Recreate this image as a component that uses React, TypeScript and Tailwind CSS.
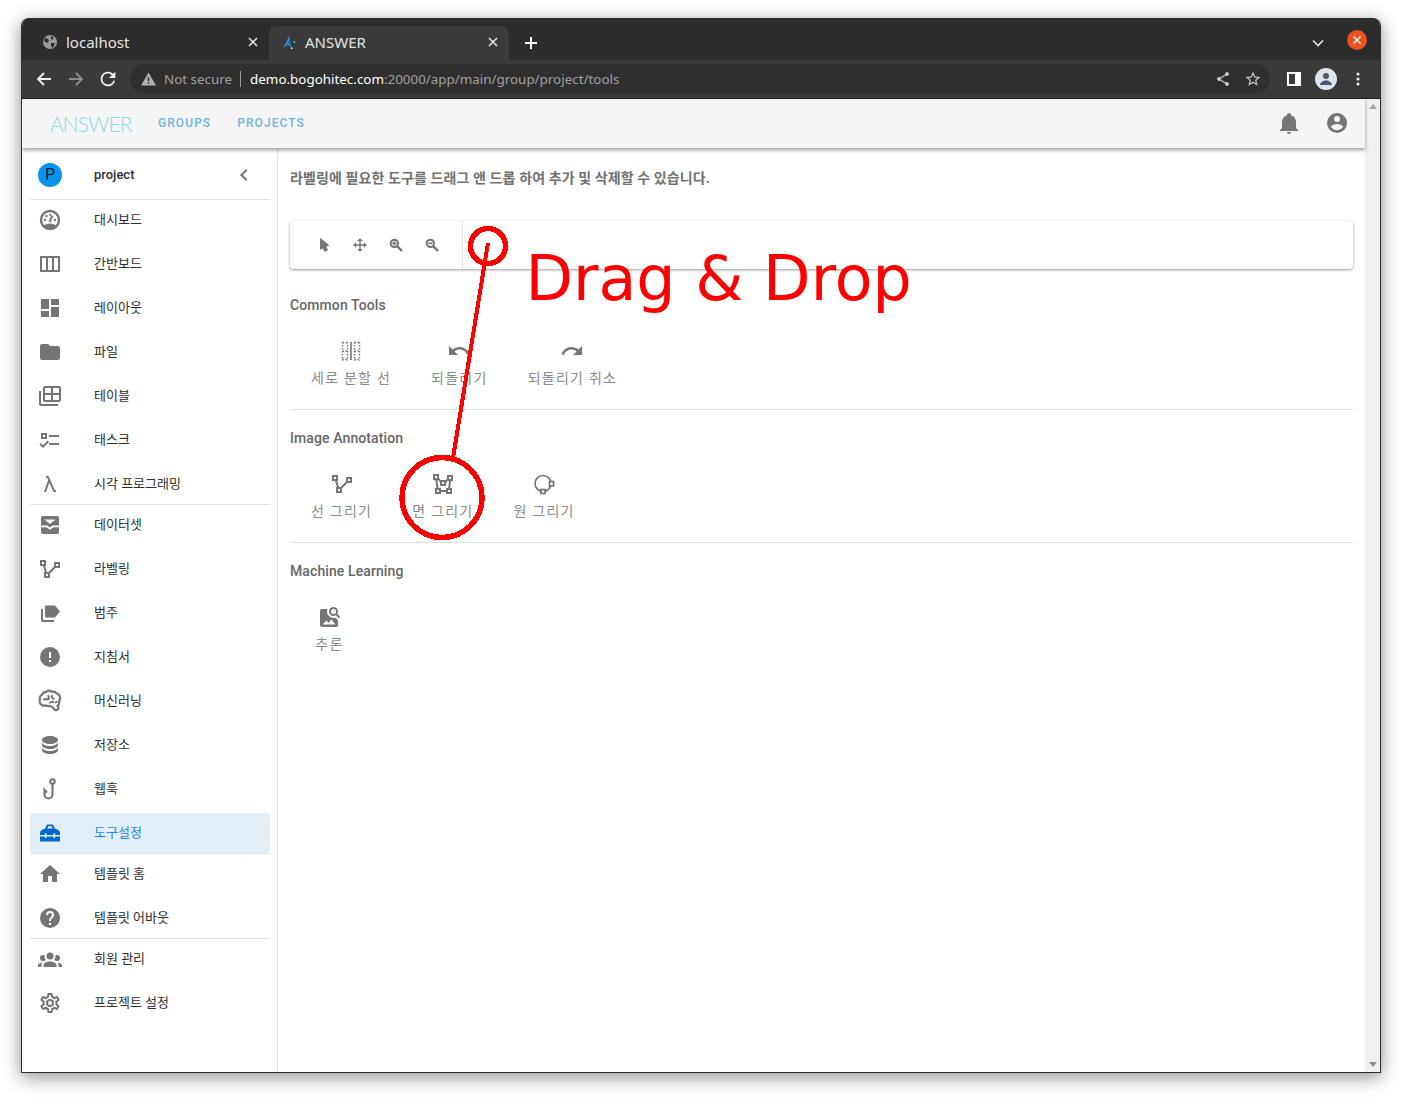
import React from "react";

const P = {
  chevL: "M15.41,16.58L10.83,12L15.41,7.41L14,6L8,12L14,18L15.41,16.58Z",
  column: "M2 4H22V20H2V4M4 6V18H8V6H4M10 6V18H14V6H10M16 6V18H20V6H16Z",
  dash: "M13,3V9H21V3M13,21H21V11H13M3,21H11V15H3M3,13H11V3H3V13Z",
  folder: "M10,4H4C2.89,4 2,4.89 2,6V18A2,2 0 0,0 4,20H20A2,2 0 0,0 22,18V8C22,6.89 21.1,6 20,6H12L10,4Z",
  tasks: "M3,5H9V11H3V5M5,7V9H7V7H5M11,7H21V9H11V7M11,15H21V17H11V15M5,20L1.5,16.5L2.91,15.09L5,17.17L9.59,12.59L11,14L5,20Z",
  lambda: "M6,20L10.16,7.91L9.34,6H8V4H10C10.42,4 10.78,4.26 10.93,4.63L16.66,18H18V20H16C15.57,20 15.21,19.73 15.07,19.36L11.33,10.65L8.12,20H6Z",
  polyline: "M2 3V9H4.95L6.95 15H6V21H12V16.41L17.41 11H22V5H16V9.59L10.59 15H9.06L7.06 9H8V3M4 5H6V7H4M18 7H20V9H18M8 17H10V19H8Z",
  alert: "M13,13H11V7H13M13,17H11V15H13M12,2A10,10 0 0,0 2,12A10,10 0 0,0 12,22A10,10 0 0,0 22,12A10,10 0 0,0 12,2Z",
  db: "M12,3C7.58,3 4,4.79 4,7C4,9.21 7.58,11 12,11C16.42,11 20,9.21 20,7C20,4.79 16.42,3 12,3M4,9V12C4,14.21 7.58,16 12,16C16.42,16 20,14.21 20,12V9C20,11.21 16.42,13 12,13C7.58,13 4,11.21 4,9M4,14V17C4,19.21 7.58,21 12,21C16.42,21 20,19.21 20,17V14C20,16.21 16.42,18 12,18C7.58,18 4,16.21 4,14Z",
  toolbox: "M2 14V12C2 10 4 8.300 7 7.800L9 3.500H15L17 7.800C20 8.300 22 10 22 12V14H17.200V12.300H15.500V14H8.500V12.300H6.800V14H2M10.200 5.300L9.400 7.500H14.600L13.800 5.300H10.200M2 15.500H6.800V17H8.500V15.500H15.500V17H17.200V15.500H22V20.500H2V15.500Z",
  home: "M10,20V14H14V20H19V12H22L12,3L2,12H5V20H10Z",
  help: "M15.07,11.25L14.17,12.17C13.45,12.89 13,13.5 13,15H11V14.5C11,13.39 11.45,12.39 12.17,11.67L13.41,10.41C13.78,10.05 14,9.55 14,9C14,7.89 13.1,7 12,7A2,2 0 0,0 10,9H8A4,4 0 0,1 12,5A4,4 0 0,1 16,9C16,9.88 15.64,10.67 15.07,11.25M13,19H11V17H13M12,2A10,10 0 0,0 2,12A10,10 0 0,0 12,22A10,10 0 0,0 22,12C22,6.47 17.5,2 12,2Z",
  group: "M12,5.5A3.5,3.5 0 0,1 15.5,9A3.5,3.5 0 0,1 12,12.5A3.5,3.5 0 0,1 8.5,9A3.5,3.5 0 0,1 12,5.5M5,8C5.56,8 6.08,8.15 6.53,8.42C6.38,9.85 6.8,11.27 7.66,12.38C7.16,13.34 6.16,14 5,14A3,3 0 0,1 2,11A3,3 0 0,1 5,8M19,8A3,3 0 0,1 22,11A3,3 0 0,1 19,14C17.84,14 16.84,13.34 16.34,12.38C17.2,11.27 17.62,9.85 17.47,8.42C17.92,8.15 18.44,8 19,8M5.5,18.25C5.5,16.18 8.41,14.5 12,14.5C15.59,14.5 18.5,16.18 18.5,18.25V20H5.5V18.25M0,20V18.5C0,17.11 1.89,15.94 4.45,15.6C3.86,16.28 3.5,17.22 3.5,18.25V20H0M24,20H20.5V18.25C20.5,17.22 20.14,16.28 19.55,15.6C22.11,15.94 24,17.11 24,18.5V20Z",
  cog: "M12,8A4,4 0 0,1 16,12A4,4 0 0,1 12,16A4,4 0 0,1 8,12A4,4 0 0,1 12,8M12,10A2,2 0 0,0 10,12A2,2 0 0,0 12,14A2,2 0 0,0 14,12A2,2 0 0,0 12,10M10,22C9.75,22 9.54,21.82 9.5,21.58L9.13,18.93C8.5,18.68 7.96,18.34 7.44,17.94L4.95,18.95C4.73,19.03 4.46,18.95 4.34,18.73L2.34,15.27C2.21,15.05 2.27,14.78 2.46,14.63L4.57,12.97L4.5,12L4.57,11L2.46,9.37C2.27,9.22 2.21,8.95 2.34,8.73L4.34,5.27C4.46,5.05 4.73,4.96 4.95,5.05L7.44,6.05C7.96,5.66 8.5,5.32 9.13,5.07L9.5,2.42C9.54,2.18 9.75,2 10,2H14C14.25,2 14.46,2.18 14.5,2.42L14.87,5.07C15.5,5.32 16.04,5.66 16.56,6.05L19.05,5.05C19.27,4.96 19.54,5.05 19.66,5.27L21.66,8.73C21.79,8.95 21.73,9.22 21.54,9.37L19.43,11L19.5,12L19.43,13L21.54,14.63C21.73,14.78 21.79,15.05 21.66,15.27L19.66,18.73C19.54,18.95 19.27,19.04 19.05,18.95L16.56,17.95C16.04,18.34 15.5,18.68 14.87,18.93L14.5,21.58C14.46,21.82 14.25,22 14,22H10M11.25,4L10.88,6.61C9.68,6.86 8.62,7.5 7.85,8.39L5.44,7.35L4.69,8.65L6.8,10.2C6.4,11.37 6.4,12.64 6.8,13.8L4.68,15.36L5.43,16.66L7.86,15.62C8.63,16.5 9.68,17.14 10.87,17.38L11.24,20H12.76L13.13,17.39C14.32,17.14 15.37,16.5 16.14,15.62L18.57,16.66L19.32,15.36L17.2,13.81C17.6,12.64 17.6,11.37 17.2,10.2L19.31,8.65L18.56,7.35L16.15,8.39C15.38,7.5 14.32,6.86 13.12,6.62L12.75,4H11.25Z",
  cursor: "M13.64,21.97C13.14,22.21 12.54,22 12.31,21.5L10.13,16.76L7.62,18.78C7.45,18.92 7.24,19 7,19A1,1 0 0,1 6,18V3A1,1 0 0,1 7,2C7.24,2 7.47,2.09 7.64,2.23L7.65,2.22L19.14,11.86C19.57,12.22 19.62,12.85 19.27,13.27C19.12,13.45 18.91,13.57 18.7,13.61L15.54,14.23L17.74,18.96C18,19.46 17.76,20.05 17.26,20.28L13.64,21.97Z",
  move: "M13,6V11H18V7.75L22.25,12L18,16.25V13H13V18H16.25L12,22.25L7.75,18H11V13H6V16.25L1.75,12L6,7.75V11H11V6H7.75L12,1.75L16.25,6H13Z",
  undo: "M12.5,8C9.85,8 7.45,9 5.6,10.6L2,7V16H11L7.38,12.38C8.77,11.22 10.54,10.5 12.5,10.5C16.04,10.5 19.05,12.81 20.1,16L22.47,15.22C21.08,11.03 17.15,8 12.5,8Z",
  redo: "M18.4,10.6C16.55,9 14.15,8 11.5,8C6.85,8 2.92,11.03 1.54,15.22L3.9,16C4.95,12.81 7.95,10.5 11.5,10.5C13.45,10.5 15.23,11.22 16.62,12.38L13,16H22V7L18.4,10.6Z",
  polygon: "M2,2V8H4.28L5.57,16H4V22H10V20.06L15,20.05V22H21V16H19.17L20,9H22V3H16V6.53L14.8,8H9.59L8,5.82V2M4,4H6V6H4M18,5H20V7H18M6.31,8H7.11L9,10.59V14H15V10.91L16.57,9H18L17.16,16H15V18.06H10V16H7.6M11,10H13V12H11M6,18H8V20H6M17,18H19V20H17",
  imgSearch: "M15.5,2C18,2 20,4 20,6.5C20,7.38 19.75,8.21 19.31,8.9L22.39,12L21,13.39L17.88,10.32C17.19,10.75 16.37,11 15.5,11C13,11 11,9 11,6.5C11,4 13,2 15.5,2M15.5,4A2.5,2.5 0 0,0 13,6.5A2.5,2.5 0 0,0 15.5,9A2.5,2.5 0 0,0 18,6.5A2.5,2.5 0 0,0 15.5,4M20,20A2,2 0 0,1 18,22H4A2,2 0 0,1 2,20V6A2,2 0 0,1 4,4H9.5C9.18,4.77 9,5.61 9,6.5A6.5,6.5 0 0,0 15.5,13C16.18,13 16.83,12.89 17.44,12.69L20,15.25V20M4.5,19.5H17.5L13.5,14.5L10.5,18L8.5,15.5L4.5,19.5Z",
  bell: "M21,19V20H3V19L5,17V11C5,7.9 7.03,5.17 10,4.29C10,4.19 10,4.1 10,4A2,2 0 0,1 12,2A2,2 0 0,1 14,4C14,4.1 14,4.19 14,4.29C16.97,5.17 19,7.9 19,11V17L21,19M14,21A2,2 0 0,1 12,23A2,2 0 0,1 10,21",
  account: "M12,19.2C9.5,19.2 7.29,17.92 6,16C6.03,14 10,12.9 12,12.9C14,12.9 17.97,14 18,16C16.71,17.92 14.5,19.2 12,19.2M12,5A3,3 0 0,1 15,8A3,3 0 0,1 12,11A3,3 0 0,1 9,8A3,3 0 0,1 12,5M12,2A10,10 0 0,0 2,12A10,10 0 0,0 12,22A10,10 0 0,0 22,12C22,6.47 17.5,2 12,2Z",
};

function I({ d, size = 24, className = "text-[#757575]" }: { d: string; size?: number; className?: string }) {
  return (
    <svg width={size} height={size} viewBox="0 0 24 24" className={"shrink-0 " + className}>
      <path d={d} fill="currentColor" fillRule="evenodd" />
    </svg>
  );
}

function S({ children, size = 24 }: { children: React.ReactNode; size?: number }) {
  return (
    <svg width={size} height={size} viewBox="0 0 24 24" className="shrink-0 text-[#757575]" fill="none" stroke="currentColor" strokeWidth={2}>
      {children}
    </svg>
  );
}

const Gauge = () => (
  <S>
    <circle cx="12" cy="12" r="9" strokeWidth={2.4} />
    <path d="M5 18.500C7 16.300 9.500 15.500 12 15.500s5 .8 7 3L16 21.500H8z" fill="currentColor" stroke="none" />
    <path d="M11.500 14 14.500 7.500" strokeWidth={2} />
    <circle cx="7" cy="12" r="1.200" fill="currentColor" stroke="none" />
    <circle cx="8.500" cy="8" r="1.200" fill="currentColor" stroke="none" />
    <circle cx="12" cy="6.800" r="1.100" fill="currentColor" stroke="none" />
    <circle cx="17" cy="12" r="1.200" fill="currentColor" stroke="none" />
  </S>
);
const TableMulti = () => (
  <S>
    <rect x="6" y="3" width="16" height="14" rx="1" />
    <path d="M6 10h16M14 3v14" />
    <path d="M2 7v13a1 1 0 0 0 1 1h17" />
  </S>
);
const Inbox = () => (
  <I d="M5 3H19A2 2 0 0 1 21 5V19A2 2 0 0 1 19 21H5A2 2 0 0 1 3 19V5A2 2 0 0 1 5 3M3 12.500V14.200H8.500L12 16.800L15.500 14.200H21V12.500H14.700L12 14.500L9.300 12.500H3M6.500 6.500L12 11L17.500 6.500H6.500Z" />
);
const Labels = () => (
  <S>
    <path d="M8 4.500h9l5 6-5 6H8a1 1 0 0 1-1-1v-10a1 1 0 0 1 1-1z" fill="currentColor" stroke="none" />
    <path d="M4 8v11a1 1 0 0 0 1 1h11" />
  </S>
);
const Brain = () => (
  <S>
    <path
      strokeWidth={2.2}
      d="M21.33,12.91C21.42,14.46 20.71,15.95 19.44,16.86L20.21,18.35C20.44,18.8 20.47,19.33 20.27,19.8C20.08,20.27 19.69,20.64 19.21,20.8L18.42,21.05C18.25,21.11 18.06,21.14 17.88,21.14C17.37,21.14 16.89,20.91 16.56,20.5L14.44,18C13.55,17.85 12.71,17.47 12,16.9C11.5,17.05 11,17.13 10.5,17.13C9.62,17.13 8.74,16.86 8,16.34C7.47,16.5 6.93,16.57 6.38,16.56C5.59,16.57 4.81,16.41 4.08,16.11C2.65,15.47 1.7,14.07 1.65,12.5C1.57,11.78 1.69,11.05 2,10.39C1.71,9.64 1.68,8.82 1.93,8.06C2.3,7.11 3,6.32 3.87,5.82C4.45,4.13 6.08,3 7.87,3.12C9.47,1.62 11.92,1.46 13.7,2.75C14.12,2.64 14.56,2.58 15,2.58C16.36,2.55 17.65,3.15 18.5,4.22C20.54,4.75 22,6.57 22.08,8.69C22.13,9.8 21.83,10.89 21.22,11.82C21.29,12.18 21.33,12.54 21.33,12.91Z"
    />
    <path strokeWidth={2} d="M5.500 11.500c1-2 3-2 4.500-.5M10 6c1.200 1.500 1.200 3 0 5M14 6c-.7 2 .3 4 2.500 4M11.500 14.500c.7-1.800 3-2.300 4.500-.8M17 13.500c1 0 2-.5 2.200-1.700" />
  </S>
);
const Hook = () => (
  <S>
    <circle cx="14.500" cy="4.500" r="2.300" />
    <path d="M14.500 7v10.500a4 4 0 0 1-8 0v-4.500l2.500 2.500" strokeWidth={2.200} />
  </S>
);
const Split = () => (
  <S>
    <path d="M12 3v18" strokeWidth={1.6} />
    <path d="M3.500 3v18.500M8.500 3v18.500M15.500 3v18.500M20.500 3v18.500" strokeWidth={1.4} strokeDasharray="1.500 1.500" />
    <path d="M3.500 3.500h5M15.500 3.500h5M3.500 20.500h5M15.500 20.500h5M3.500 12h5M15.500 12h5" strokeWidth={1.4} strokeDasharray="1.500 1.500" />
  </S>
);
const CircleTool = () => (
  <S>
    <circle cx="11" cy="11.500" r="8" strokeWidth={1.700} />
    <rect x="17.500" y="9.500" width="4" height="4.500" fill="#fff" strokeWidth={1.700} />
    <rect x="9" y="17.500" width="4" height="4" fill="#fff" strokeWidth={1.700} />
  </S>
);
const Zoom = ({ plus }: { plus?: boolean }) => (
  <S size={16}>
    <circle cx="9.500" cy="9.500" r="5.500" strokeWidth={3} />
    <path d="M14 14 21 21" strokeWidth={3.600} />
    <path d={plus ? "M6.500 9.500h6M9.500 6.500v6" : "M6.500 9.500h6"} strokeWidth={2.400} />
  </S>
);

type Item = { label: string; icon: React.ReactNode; active?: boolean };
const groups: Item[][] = [
  [
    { label: "대시보드", icon: <Gauge /> },
    { label: "간반보드", icon: <I d={P.column} /> },
    { label: "레이아웃", icon: <I d={P.dash} /> },
    { label: "파일", icon: <I d={P.folder} /> },
    { label: "테이블", icon: <TableMulti /> },
    { label: "태스크", icon: <I d={P.tasks} /> },
    { label: "시각 프로그래밍", icon: <I d={P.lambda} /> },
  ],
  [
    { label: "데이터셋", icon: <Inbox /> },
    { label: "라벨링", icon: <I d={P.polyline} /> },
    { label: "범주", icon: <Labels /> },
    { label: "지침서", icon: <I d={P.alert} /> },
    { label: "머신러닝", icon: <Brain /> },
    { label: "저장소", icon: <I d={P.db} /> },
    { label: "웹훅", icon: <Hook /> },
    { label: "도구설정", icon: <I d={P.toolbox} className="text-[#0468c9]" />, active: true },
  ],
  [
    { label: "템플릿 홈", icon: <I d={P.home} /> },
    { label: "템플릿 어바웃", icon: <I d={P.help} /> },
  ],
  [
    { label: "회원 관리", icon: <I d={P.group} /> },
    { label: "프로젝트 설정", icon: <I d={P.cog} /> },
  ],
];

function SideItem({ item }: { item: Item }) {
  return (
    <div
      className={
        "flex h-10 items-center rounded px-2 mb-1 last:mb-0 " +
        (item.active ? "bg-[#e2eff8] text-[#1d86e3]" : "text-[#2e2e2e]")
      }
    >
      {item.icon}
      <span className="ml-8 text-[13px] leading-4">{item.label}</span>
    </div>
  );
}

function Sidebar() {
  return (
    <aside className="flex w-[256px] shrink-0 flex-col border-r border-[#e0e0e0] bg-white pl-2 pr-[7px]">
      <div className="flex h-[51px] items-center px-2 pt-[3px]">
        <div className="flex h-6 w-6 items-center justify-center rounded-full bg-[#0a93ee] text-[16px] text-[#10202e]">P</div>
        <span className="ml-8 flex-1 text-[13px] font-medium text-[#2e2e2e]">project</span>
        <span className="mr-[6px]"><I d={P.chevL} /></span>
      </div>
      {groups.map((g, i) => (
        <div key={i}>
          <div className="h-px bg-[#e0e0e0]" />
          {g.map((it) => (
            <SideItem key={it.label} item={it} />
          ))}
        </div>
      ))}
    </aside>
  );
}

function Tool({ icon, label }: { icon: React.ReactNode; label: string }) {
  return (
    <div className="flex h-[60px] min-w-[69px] flex-col items-center px-4 pt-1">
      {icon}
      <span className="mt-[5px] whitespace-nowrap text-[14px] leading-5 tracking-[0.0892857em] text-[#8a8a8a]">{label}</span>
    </div>
  );
}

function Section({ title, children, divider = true }: { title: string; children: React.ReactNode; divider?: boolean }) {
  return (
    <section className={divider ? "border-b border-[#e2e2e2] pb-[14px] mb-[18px]" : ""}>
      <h2 className="text-[14px] font-medium leading-5 tracking-[0.1px] text-[#666]">{title}</h2>
      <div className="mt-5 flex gap-2 pl-[5px]">{children}</div>
    </section>
  );
}

function Main() {
  return (
    <main className="min-w-0 flex-1 bg-white px-3 pt-[20px]">
      <p className="text-[14px] font-semibold leading-5 tracking-[0.1px] text-[#707070]">
        라벨링에 필요한 도구를 드래그 앤 드롭 하여 추가 및 삭제할 수 있습니다.
      </p>
      <div className="mt-[33px] flex h-12 rounded bg-white shadow-[0_1px_3px_rgba(0,0,0,0.4)]">
        <div className="flex h-full w-[173px] items-center gap-5 border-r border-[#e2e2e2] pl-[26px]">
          <I d={P.cursor} size={16} />
          <I d={P.move} size={16} />
          <Zoom plus />
          <Zoom />
        </div>
      </div>
      <div className="mt-[26px]">
        <Section title="Common Tools">
          <Tool icon={<Split />} label="세로 분할 선" />
          <Tool icon={<I d={P.undo} />} label="되돌리기" />
          <Tool icon={<I d={P.redo} />} label="되돌리기 취소" />
        </Section>
        <Section title="Image Annotation">
          <Tool icon={<I d={P.polyline} />} label="선 그리기" />
          <Tool icon={<I d={P.polygon} />} label="면 그리기" />
          <Tool icon={<CircleTool />} label="원 그리기" />
        </Section>
        <Section title="Machine Learning" divider={false}>
          <Tool icon={<I d={P.imgSearch} />} label="추론" />
        </Section>
      </div>
    </main>
  );
}

function AppBar() {
  return (
    <header className="relative z-10 flex h-[49px] shrink-0 items-center bg-[#f5f5f5] pb-px pl-[28px] pr-4 shadow-[0_2px_4px_rgba(0,0,0,0.4)]">
      <span className="w-[83px] font-['Lato',sans-serif] text-[21px] font-light leading-none tracking-[-0.9px] text-[#8ed8e6]">ANSWER</span>
      <span className="ml-[25px] text-[12px] font-medium tracking-[0.0892857em] text-[#6fb3e4]">GROUPS</span>
      <span className="ml-[26px] text-[12px] font-medium tracking-[0.0892857em] text-[#6fb3e4]">PROJECTS</span>
      <div className="ml-auto flex items-center gap-6">
        <I d={P.bell} />
        <I d={P.account} />
      </div>
    </header>
  );
}

function Tab({ title, active, favicon, width }: { title: string; active?: boolean; favicon: React.ReactNode; width: string }) {
  return (
    <div className={"flex h-[34px] items-center rounded-t-lg pb-[2px] pl-3 pr-[11px] " + width + (active ? " bg-[#3a3a3a]" : "")}>
      <span className="flex w-4 justify-center">{favicon}</span>
      <span className="ml-2 flex-1 text-[15px] text-[#e4e4e4]">{title}</span>
      <svg width="10" height="10" viewBox="0 0 10 10" stroke="#e8e8e8" strokeWidth="1.500"><path d="M1 1l8 8M9 1l-8 8" /></svg>
    </div>
  );
}

function Chrome() {
  return (
    <div className="shrink-0 font-['Noto_Sans',sans-serif]">
      <div className="flex h-[42px] items-end bg-[#2c2c2c] pl-2">
        <Tab
          width="w-[239px]"
          title="localhost"
          favicon={
            <svg width="16" height="16" viewBox="0 0 16 16"><circle cx="8" cy="8" r="7" fill="#9a9a9a" /><path d="M3 4l3 1 1 2-2 2-3-2zM9 2l3 2-2 2-1-2zM9 9l4 0-2 5-2-2z" fill="#2c2c2c" /></svg>
          }
        />
        <Tab
          width="w-[240px]"
          active
          title="ANSWER"
          favicon={
            <svg width="18" height="18" viewBox="0 0 18 18" fill="none"><path d="M9.500 1.500 2.500 15.500l5.500-3.500 3.500 3.500z" fill="#2a85c7" /><path d="M9.500 6 8.800 10.500l1.200.5z" fill="#3a3a3a" /><circle cx="15" cy="9" r="1" fill="#5fc6e6" /><circle cx="12" cy="16" r="1" fill="#dff3fb" /></svg>
          }
        />
        <svg className="mb-[10px] ml-[15px]" width="14" height="14" viewBox="0 0 14 14" stroke="#fff" strokeWidth="2"><path d="M7 1v12M1 7h12" /></svg>
        <div className="mb-[10px] ml-auto mr-[13px] flex items-center gap-[23px]">
          <svg className="mt-[6px]" width="12" height="8" viewBox="0 0 12 8" fill="none" stroke="#e8e8e8" strokeWidth="1.600"><path d="M1 1.500l5 5 5-5" /></svg>
          <span className="flex h-5 w-5 items-center justify-center rounded-full bg-[#e95420]">
            <svg width="8" height="8" viewBox="0 0 8 8" stroke="#fff" strokeWidth="1.300"><path d="M.5.5l7 7M7.500.5l-7 7" /></svg>
          </span>
        </div>
      </div>
      <div className="flex h-[39px] items-center border-b border-[#1f1f1f] bg-[#3a3a3a] pl-[14px]">
        <svg width="16" height="16" viewBox="0 0 16 16" fill="none" stroke="#f1f1f1" strokeWidth="1.800"><path d="M15 8H2M8 2 2 8l6 6" /></svg>
        <svg className="ml-4" width="16" height="16" viewBox="0 0 16 16" fill="none" stroke="#8d8d8d" strokeWidth="1.800"><path d="M1 8h13M8 2l6 6-6 6" /></svg>
        <svg className="ml-[13px]" width="22" height="22" viewBox="0 0 24 24"><path fill="#f1f1f1" d="M17.650 6.350A7.958 7.958 0 0 0 12 4a8 8 0 1 0 7.730 10h-2.080A6 6 0 1 1 12 6c1.660 0 3.140.69 4.220 1.780L13 11h7V4l-2.350 2.350z" /></svg>
        <div className="ml-[11px] flex h-[30px] w-[1140px] items-center rounded-full bg-[#2f2f2f] pl-[11px] pr-[8px]">
          <svg width="15" height="14" viewBox="0 0 16 14"><path d="M8 0 16 14H0zM7.200 5v4.500h1.600V5zM7.200 10.500v1.600h1.600v-1.600z" fill="#b0b0b0" fillRule="evenodd" /></svg>
          <span className="ml-[8px] text-[13.4px] text-[#a0a0a0]">Not secure</span>
          <span className="mx-2 h-4 w-px bg-[#9a9a9a]" />
          <span className="ml-px text-[13.4px] text-[#a0a0a0]"><span className="text-white">demo.bogohitec.com</span>:20000/app/main/group/project/tools</span>
          <div className="ml-auto flex items-center gap-[14px]">
            <svg width="14" height="16" viewBox="0 0 14 16" fill="#c8c8c8" stroke="#c8c8c8"><path d="M11 3 3 8l8 5" fill="none" strokeWidth="1.300" /><circle cx="11" cy="3" r="1.500" /><circle cx="3" cy="8" r="1.500" /><circle cx="11" cy="13" r="1.500" /></svg>
            <svg width="18" height="18" viewBox="0 0 24 24"><path fill="#c8c8c8" fillRule="evenodd" d="M22 9.240l-7.190-.62L12 2 9.190 8.630 2 9.240l5.460 4.730L5.820 21 12 17.270 18.180 21l-1.630-7.030L22 9.240zM12 15.400l-3.760 2.270 1-4.280-3.320-2.880 4.380-.38L12 6.100l1.710 4.040 4.380.38-3.320 2.880 1 4.280L12 15.400z" /></svg>
          </div>
        </div>
        <span className="ml-[17px] h-[14px] w-[14px] border-2 border-r-[6px] border-white" />
        <span className="ml-[14px] flex h-[22px] w-[22px] items-center justify-center overflow-hidden rounded-full bg-[#dfe3ec]">
          <svg width="18" height="18" viewBox="0 0 24 24"><path fill="#46566f" d="M12 4a4 4 0 1 1 0 8 4 4 0 0 1 0-8zM4 20c0-3 4-6 8-6s8 3 8 6z" /></svg>
        </span>
        <svg className="ml-[19px]" width="4" height="14" viewBox="0 0 4 14" fill="#f1f1f1"><circle cx="2" cy="2" r="1.500" /><circle cx="2" cy="7" r="1.500" /><circle cx="2" cy="12" r="1.500" /></svg>
      </div>
    </div>
  );
}

function Scrollbar() {
  return (
    <div className="flex w-[15px] shrink-0 flex-col items-center justify-between bg-[#f1f1f1] py-[5px]">
      <span className="h-0 w-0 border-x-[4px] border-b-[5px] border-x-transparent border-b-[#a3a3a3]" />
      <span className="h-0 w-0 border-x-[4px] border-t-[5px] border-x-transparent border-t-[#8f8f8f]" />
    </div>
  );
}

export default function App() {
  return (
    <div className="relative h-[1097px] w-full overflow-hidden bg-white pl-[21px] pt-[18px] font-[Roboto,'Noto_Sans_CJK_KR',sans-serif]">
      <div className="flex h-[1055px] w-[1360px] flex-col overflow-hidden rounded-t-lg border-x border-b border-[#2a2a2a] bg-white shadow-[0_4px_18px_rgba(0,0,0,0.45)]">
        <Chrome />
        <div className="flex min-h-0 flex-1">
          <div className="flex min-w-0 flex-1 flex-col">
            <AppBar />
            <div className="flex min-h-0 flex-1">
              <Sidebar />
              <Main />
            </div>
          </div>
          <Scrollbar />
        </div>
      </div>
      <svg className="pointer-events-none absolute inset-0" width="1402" height="1097" fill="none" stroke="#ff0000" strokeWidth="5.500" shapeRendering="crispEdges">
        <circle cx="488" cy="246" r="17.500" />
        <path d="M488 243 453 458" strokeWidth="4" />
        <circle cx="442" cy="497.500" r="40" />
      </svg>
      <span className="pointer-events-none absolute left-[525.500px] top-[242px] whitespace-nowrap font-['DejaVu_Sans',sans-serif] text-[61.800px] leading-[75px] text-[#ff0000]">
        Drag &amp; Drop
      </span>
    </div>
  );
}
